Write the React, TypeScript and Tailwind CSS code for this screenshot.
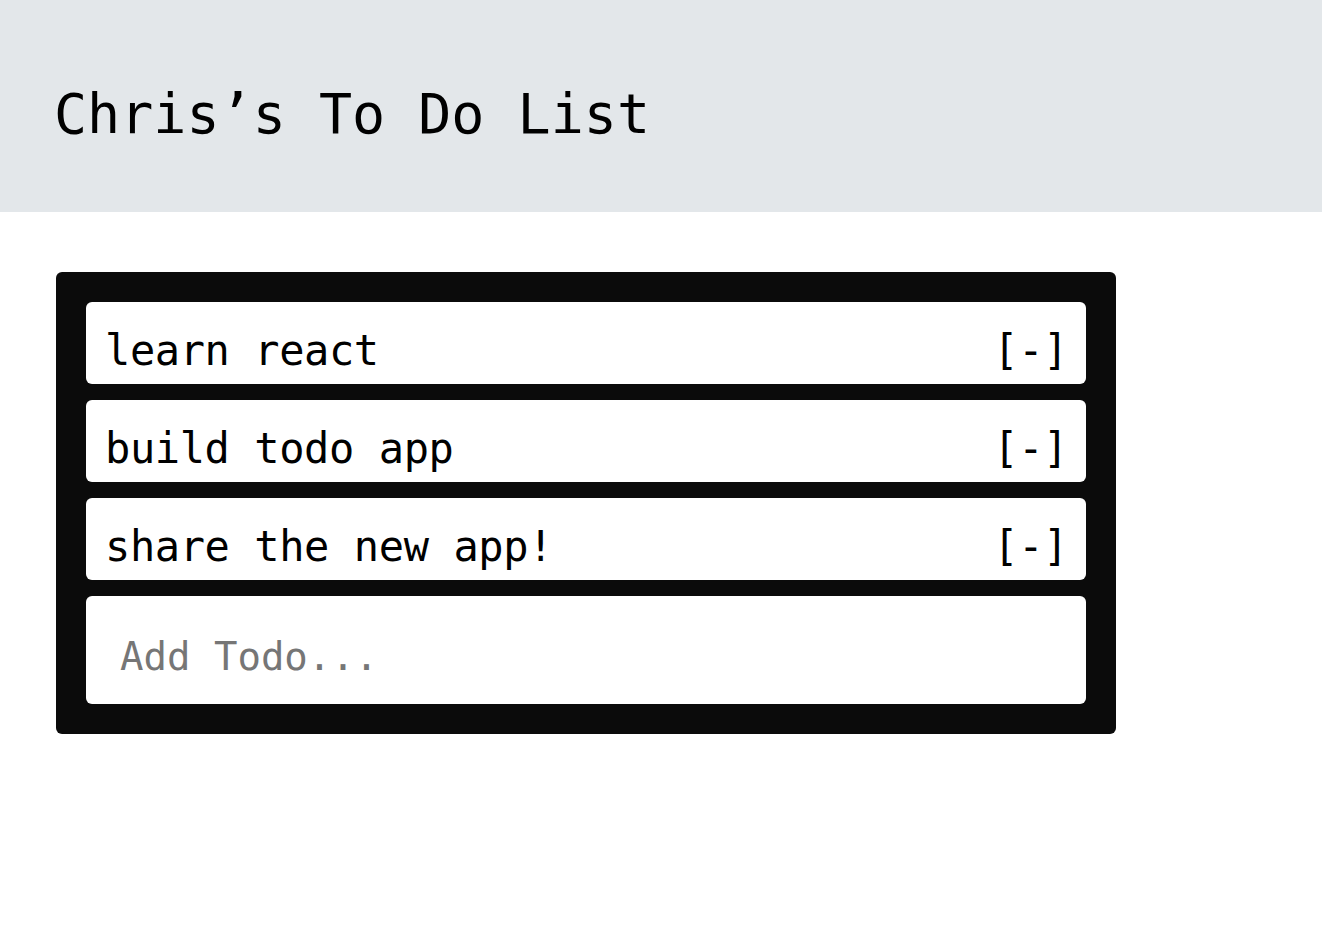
import { useState } from "react";

const mono = "font-['DejaVu_Sans_Mono','Liberation_Mono',monospace]";

export default function App() {
  const [todos, setTodos] = useState(["learn react", "build todo app", "share the new app!"]);
  const [text, setText] = useState("");

  return (
    <div className={`min-h-screen bg-white text-black ${mono}`}>
      <header className="h-[212px] bg-[#e3e7ea] px-[54px] pt-[87px]">
        <h1 className="text-[55px] leading-none font-normal">Chris’s To Do List</h1>
      </header>

      <div className="ml-[56px] mt-[60px] flex w-[1060px] flex-col gap-4 rounded-md bg-[#0b0b0b] p-[30px]">
        {todos.map((todo, i) => (
          <div
            key={i}
            className="flex h-[82px] items-start justify-between rounded-md bg-white pl-[19px] pr-[18px] pt-[28px] text-[42px] leading-none tracking-[-0.4px]"
          >
            <span>{todo}</span>
            <button
              className="cursor-pointer leading-none"
              onClick={() => setTodos(todos.filter((_, j) => j !== i))}
            >
              [-]
            </button>
          </div>
        ))}
        <form
          onSubmit={(e) => {
            e.preventDefault();
            if (text.trim()) setTodos([...todos, text.trim()]);
            setText("");
          }}
        >
          <input
            className={`block h-[108px] w-full rounded-md bg-white pl-[34px] pt-[13px] text-[39px] outline-none placeholder:text-[#767676] ${mono}`}
            placeholder="Add Todo..."
            value={text}
            onChange={(e) => setText(e.target.value)}
          />
        </form>
      </div>
    </div>
  );
}
